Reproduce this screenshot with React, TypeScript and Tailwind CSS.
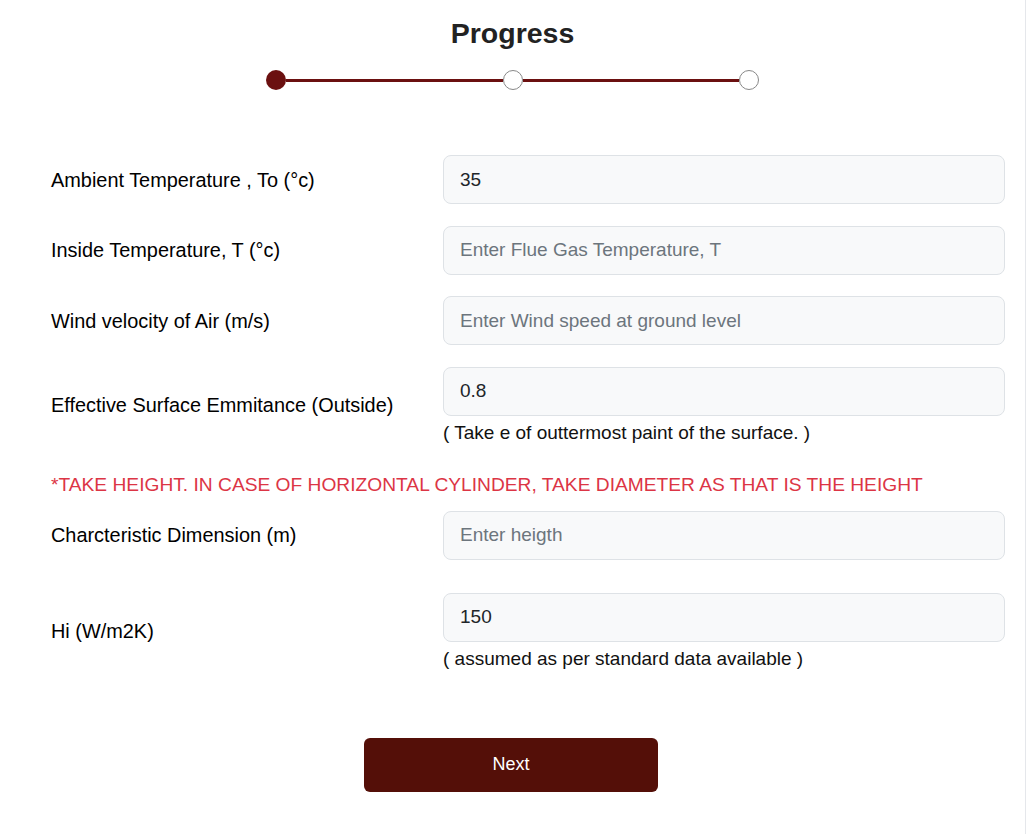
import React from "react";

function Field({ label, value, placeholder, note }: { label: string; value?: string; placeholder?: string; note?: string }) {
  return (
    <div className="grid grid-cols-[392px_562px] items-center">
      <label className="text-[19.9px] leading-[22px] text-black">{label}</label>
      <div className="flex flex-col">
        <input
          className="h-[49px] w-full rounded-[8px] border border-[#dee2e6] bg-[#f8f9fa] px-4 text-[19px] text-[#212529] placeholder:text-[#6c757d] outline-none"
          defaultValue={value}
          placeholder={placeholder}
        />
        {note && <p className="mt-[7px] text-[19px] leading-[20px] text-[#111]">{note}</p>}
      </div>
    </div>
  );
}

export default function App() {
  return (
    <div className="w-[1026px] min-h-[834px] border-r border-[#e5e7eb] bg-white font-['Liberation_Sans',Arial,sans-serif]">
      <h1 className="pt-4 text-center text-[28.5px] font-bold leading-[34px] text-[#222]">Progress</h1>

      {/* stepper */}
      <div className="mx-auto mt-5 flex w-[493px] items-center">
        <span className="h-5 w-5 rounded-full bg-[#6b1010]" />
        <span className="h-[3px] flex-1 bg-[#6b1010]" />
        <span className="h-5 w-5 rounded-full border border-[#888] bg-white" />
        <span className="h-[3px] flex-1 bg-[#6b1010]" />
        <span className="h-5 w-5 rounded-full border border-[#888] bg-white" />
      </div>

      <form className="mt-[65px] flex flex-col pl-[51px]">
        <div className="flex flex-col gap-[21.5px]">
          <Field label="Ambient Temperature , To (°c)" value="35" />
          <Field label="Inside Temperature, T (°c)" placeholder="Enter Flue Gas Temperature, T" />
          <Field label="Wind velocity of Air (m/s)" placeholder="Enter Wind speed at ground level" />
          <Field label="Effective Surface Emmitance (Outside)" value="0.8" note="( Take e of outtermost paint of the surface. )" />
        </div>

        <p className="mt-[32px] text-[19.2px] leading-[20px] text-[#dc3545]">
          *TAKE HEIGHT. IN CASE OF HORIZONTAL CYLINDER, TAKE DIAMETER AS THAT IS THE HEIGHT
        </p>

        <div className="mt-[16px]">
          <Field label="Charcteristic Dimension (m)" placeholder="Enter heigth" />
        </div>
        <div className="mt-[33px]">
          <Field label="Hi (W/m2K)" value="150" note="( assumed as per standard data available )" />
        </div>
      </form>

      <div className="mt-[69px] flex justify-center pr-[3px]">
        <button className="h-[54px] w-[294px] rounded-[6px] bg-[#540f08] text-[18px] text-white">Next</button>
      </div>
    </div>
  );
}
